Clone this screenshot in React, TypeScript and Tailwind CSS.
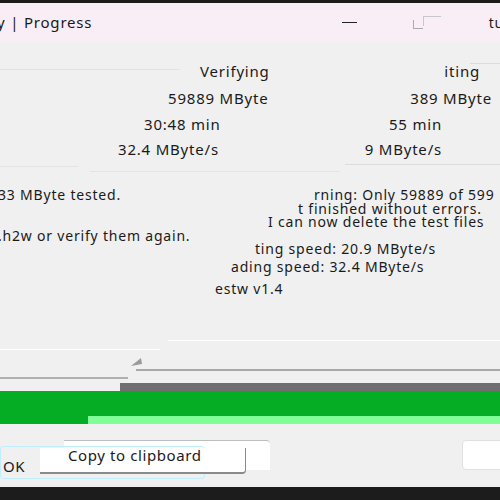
const FONT = { fontFamily: '"Noto Sans", "Open Sans", sans-serif' }

function Line({ className }: { className: string }) {
  return <div className={className} />
}

export default function App() {
  return (
    <div style={FONT} className="w-[500px] h-[500px] overflow-hidden bg-[#f0f0f0] flex flex-col text-[#1a1a1a] tracking-[0.8px]">
      <div className="h-[3px] shrink-0 bg-[#1c1c1c]" />

      {/* title bar */}
      <div className="h-[39px] shrink-0 bg-[#f9eef6] flex items-center text-[15px]">
        <span className="-ml-[3px]">y | Progress</span>
        <span className="ml-[250px] w-[15px] h-[1.5px] bg-[#222]" />
        <span className="ml-[56px] relative w-[30px] h-[14px]">
          <span className="absolute left-0 top-[4px] w-[10px] h-[9px] border-l border-b border-[#aaa]" />
          <span className="absolute left-[10px] top-0 w-[18px] h-[10px] border-t border-l border-[#c8c8c8]" />
        </span>
        <span className="ml-auto -mr-[4px] text-[14px]">tu</span>
      </div>

      {/* stats */}
      <div className="h-[16px] shrink-0 flex items-end">
        <Line className="w-[180px] h-px bg-[#e2e2e2] mb-[-12px]" />
        <Line className="ml-auto w-[30px] h-px bg-[#dcdcdc] mb-[-6px]" />
      </div>
      <div className="flex flex-col text-[15px] leading-[26px] shrink-0">
        <div className="h-[27px] flex">
          <span className="ml-[200px]">Verifying</span>
          <span className="ml-auto mr-[20px]">iting</span>
        </div>
        <div className="h-[26px] flex">
          <span className="ml-[168px]">59889 MByte</span>
          <span className="ml-auto mr-[8px]">389 MByte</span>
        </div>
        <div className="h-[25px] flex">
          <span className="ml-[144px]">30:48 min</span>
          <span className="ml-auto mr-[58px]">55 min</span>
        </div>
        <div className="h-[24px] flex">
          <span className="ml-[118px]">32.4 MByte/s</span>
          <span className="ml-auto mr-[58px]">9 MByte/s</span>
        </div>
      </div>
      <div className="h-[28px] shrink-0 flex items-start pt-[4px]">
        <Line className="w-[78px] h-px bg-[#e4e4e4] mt-[2px]" />
        <Line className="ml-[12px] w-[250px] h-px bg-[#e4e4e4] mt-[7px]" />
        <Line className="ml-auto w-[155px] h-px bg-[#dcdcdc]" />
      </div>

      {/* result text */}
      <div className="flex flex-col text-[14px] leading-[14px] whitespace-nowrap shrink-0">
        <div className="h-[14px] flex">
          <span className="-ml-[2px]">33 MByte tested.</span>
          <span className="ml-[193px]">rning: Only 59889 of 599</span>
        </div>
        <div className="h-[13px] pl-[298px]">t finished without errors.</div>
        <div className="h-[14px] pl-[268px]">I can now delete the test files</div>
        <div className="h-[13px] -ml-[2px]">.h2w or verify them again.</div>
        <div className="h-[18px] pl-[255px]">ting speed: 20.9 MByte/s</div>
        <div className="h-[22px] pl-[231px]">ading speed: 32.4 MByte/s</div>
        <div className="h-[14px] pl-[215px]">estw v1.4</div>
      </div>

      {/* progress */}
      <div className="h-[54px] shrink-0 relative">
        <Line className="absolute left-[168px] right-0 top-[44px] h-px bg-white" />
        <Line className="absolute left-0 w-[160px] top-[53px] h-px bg-white" />
      </div>
      <div className="h-[33px] shrink-0 relative">
        <svg className="absolute left-[128px] top-[4px]" width="18" height="16" viewBox="0 0 18 16">
          <path d="M3 12 L13 4 L14 10 Z" fill="#9a9a9a" />
        </svg>
        <Line className="absolute left-[136px] right-0 top-[19px] h-[2px] bg-[#a8a8a8]" />
        <Line className="absolute left-0 w-[128px] top-[27px] h-[2px] bg-[#b0b0b0]" />
      </div>
      <div className="flex shrink-0">
        <div className="w-[120px]" />
        <div className="flex-1 h-[8px] bg-[#707070]" />
      </div>
      <div className="h-[25px] shrink-0 bg-[#05ad24]" />
      <div className="flex h-[8px] shrink-0">
        <div className="w-[88px] bg-[#05ad24]" />
        <div className="flex-1 bg-[#80ff98]" />
      </div>

      {/* buttons */}
      <div className="h-[63px] shrink-0 relative tracking-[0.6px]">
        <div className="absolute left-[64px] top-[16px] w-[206px] h-[30px] bg-white border-t border-[#bdbdbd] rounded-tr-[4px]" />
        <div className="absolute left-[0px] top-[22px] w-[205px] h-[33px] border border-[#bfeeff] rounded-[3px]" />
        <div className="absolute left-[40px] top-[24px] w-[206px] h-[26px] bg-white border-b-2 border-r border-[#8a8a8a] rounded-br-[4px]" />
        <span className="absolute left-[68px] top-[20px] text-[15px]">Copy to clipboard</span>
        <span className="absolute left-[3px] top-[31px] text-[15px]">OK</span>
        <div className="absolute left-[462px] top-[16px] w-[45px] h-[30px] bg-white border border-[#e0e0e0] rounded-[4px]" />
      </div>
      <div className="flex-1 bg-[#1c1c1c]" />
    </div>
  )
}
